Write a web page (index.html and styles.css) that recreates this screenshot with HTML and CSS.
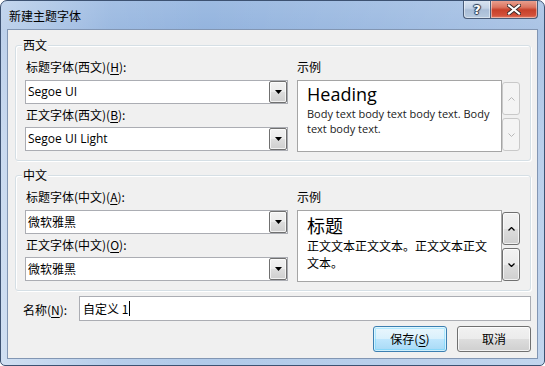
FILE: index.html
```html
<!DOCTYPE html>
<html lang="zh-CN">
<head>
<meta charset="utf-8">
<title>新建主题字体</title>
<link rel="stylesheet" href="styles.css">
</head>
<body>
<div class="window">
  <div class="titlebar">
    <span class="title">新建主题字体</span>
    <div class="caption-btns">
      <div class="cap help">?</div>
      <div class="cap close">
        <svg width="14" height="11" viewBox="0 0 14 11"><path d="M2 1.5 L12 9.5 M12 1.5 L2 9.5" stroke="#3a2a2a" stroke-width="4" stroke-linecap="square"/><path d="M2 1.5 L12 9.5 M12 1.5 L2 9.5" stroke="#fff" stroke-width="2.2" stroke-linecap="square"/></svg>
      </div>
    </div>
  </div>
  <div class="client">
    <div class="group">
      <span class="legend">西文</span>
      <div class="group-body">
        <div class="col-left">
          <div class="label">标题字体(西文)(<u>H</u>):</div>
          <div class="combo"><span class="combo-text latin">Segoe UI</span><span class="drop"><svg width="7" height="4" viewBox="0 0 7 4"><path d="M0 0 H7 L3.5 4 Z" fill="#000"/></svg></span></div>
          <div class="label second">正文字体(西文)(<u>B</u>):</div>
          <div class="combo"><span class="combo-text latin">Segoe UI Light</span><span class="drop"><svg width="7" height="4" viewBox="0 0 7 4"><path d="M0 0 H7 L3.5 4 Z" fill="#000"/></svg></span></div>
        </div>
        <div class="col-right">
          <div class="label">示例</div>
          <div class="preview-row">
            <div class="preview latin-preview">
              <div class="ph-latin">Heading</div>
              <div class="pb-latin">Body text body text body text. Body<br>text body text.</div>
            </div>
            <div class="spin">
              <div class="sbtn disabled"><svg width="7" height="4" viewBox="0 0 7 4"><path d="M0.5 3.5 L3.5 0.5 L6.5 3.5" fill="none" stroke="#b8b8b8" stroke-width="1"/></svg></div>
              <div class="sbtn disabled"><svg width="7" height="4" viewBox="0 0 7 4"><path d="M0.5 0.5 L3.5 3.5 L6.5 0.5" fill="none" stroke="#b8b8b8" stroke-width="1"/></svg></div>
            </div>
          </div>
        </div>
      </div>
    </div>

    <div class="group group-cn">
      <span class="legend">中文</span>
      <div class="group-body">
        <div class="col-left">
          <div class="label">标题字体(中文)(<u>A</u>):</div>
          <div class="combo"><span class="combo-text">微软雅黑</span><span class="drop"><svg width="7" height="4" viewBox="0 0 7 4"><path d="M0 0 H7 L3.5 4 Z" fill="#000"/></svg></span></div>
          <div class="label second">正文字体(中文)(<u>O</u>):</div>
          <div class="combo"><span class="combo-text">微软雅黑</span><span class="drop"><svg width="7" height="4" viewBox="0 0 7 4"><path d="M0 0 H7 L3.5 4 Z" fill="#000"/></svg></span></div>
        </div>
        <div class="col-right">
          <div class="label">示例</div>
          <div class="preview-row">
            <div class="preview cn-preview">
              <div class="ph-cn">标题</div>
              <div class="pb-cn">正文文本正文文本。正文文本正文<br>文本。</div>
            </div>
            <div class="spin">
              <div class="sbtn"><svg width="7" height="4" viewBox="0 0 7 4"><path d="M0.5 3.5 L3.5 0.5 L6.5 3.5" fill="none" stroke="#000" stroke-width="1.3"/></svg></div>
              <div class="sbtn"><svg width="7" height="4" viewBox="0 0 7 4"><path d="M0.5 0.5 L3.5 3.5 L6.5 0.5" fill="none" stroke="#000" stroke-width="1.3"/></svg></div>
            </div>
          </div>
        </div>
      </div>
    </div>

    <div class="name-row">
      <span class="name-label">名称(<u>N</u>):</span>
      <div class="name-input"><span>自定义 1</span><span class="caret"></span></div>
    </div>
    <div class="btn-row">
      <div class="btn default">保存(<u>S</u>)</div>
      <div class="btn">取消</div>
    </div>
  </div>
</div>
</body>
</html>
```

FILE: styles.css
```css
html, body {
  margin: 0;
  padding: 0;
  background: #ffffff;
}
body {
  font-family: "Noto Sans CJK SC", "Noto Sans", sans-serif;
  font-size: 12px;
  color: #000;
}
u { text-decoration-thickness: 1px; text-underline-offset: 2px; }

.window {
  width: 545px;
  height: 366px;
  box-sizing: border-box;
  border: 1px solid #3d5272;
  border-radius: 7px 7px 5px 5px;
  display: flex;
  flex-direction: column;
  overflow: hidden;
  background:
    linear-gradient(to right, rgba(255,255,255,0.4) 0%, rgba(255,255,255,0.08) 20%, rgba(255,255,255,0) 38%, rgba(255,255,255,0.1) 70%, rgba(255,255,255,0.22) 100%),
    linear-gradient(to bottom, #9dbbe2 0%, #94b4de 8%, #a7c2e6 40%, #b1cae9 100%);
}

.titlebar {
  height: 28px;
  flex: none;
  display: flex;
  align-items: flex-start;
}
.title {
  padding: 7px 0 0 8px;
  line-height: 16px;
  font-size: 12px;
  color: #000;
}
.caption-btns {
  margin-left: auto;
  margin-right: 6px;
  margin-top: -1px;
  display: flex;
}
.cap {
  height: 19px;
  box-sizing: border-box;
  border: 1px solid #4a5c78;
  border-top: none;
  display: flex;
  align-items: center;
  justify-content: center;
  box-shadow: inset 0 0 0 1px rgba(255,255,255,0.45);
}
.help {
  width: 27px;
  border-radius: 0 0 0 4px;
  border-right: none;
  background: linear-gradient(to bottom, #dbe5f2 0%, #c3d2e6 45%, #a9bdd7 55%, #b7cadf 100%);
  color: #fff;
  font-family: "DejaVu Sans", sans-serif;
  font-weight: bold;
  font-size: 13px;
  line-height: 17px;
  text-shadow: 0 0 1px #2c3a52, 1px 0 1px #2c3a52, -1px 0 1px #2c3a52, 0 1px 1px #2c3a52, 0 -1px 1px #2c3a52;
}
.close {
  width: 48px;
  border-radius: 0 0 4px 0;
  background: linear-gradient(to bottom, #eba595 0%, #dc7560 40%, #c7402a 55%, #d2503a 85%, #e07c66 100%);
}

.client {
  flex: 1;
  margin: 0 6px 6px 6px;
  border: 1px solid #8296b3;
  background: #f0f0f0;
  padding: 15px 6px 0 7px;
  display: flex;
  flex-direction: column;
}

.group {
  height: 116px;
  box-sizing: border-box;
  border: 1px solid #d5dfe5;
  border-radius: 3px;
  box-shadow: inset 1px 1px 0 #fff, 1px 1px 0 #fff;
  display: flex;
  flex-direction: column;
}
.group-cn { margin-top: 14px; }
.legend {
  align-self: flex-start;
  margin: -8px 0 0 6px;
  padding: 0 1px;
  line-height: 14px;
  background: #f0f0f0;
}
.group-body {
  display: flex;
  gap: 9px;
  padding: 0 10px 0 9px;
}
.col-left { width: 263px; display: flex; flex-direction: column; }
.col-right { width: 223px; display: flex; flex-direction: column; }

.label {
  line-height: 16px;
  margin: 7px 0 5px 1px;
}
.label.second { margin: 3px 0 4px 1px; }
.col-right .label { margin-left: 0; }

.combo {
  height: 24px;
  box-sizing: border-box;
  border: 1px solid #abadb3;
  background: #fff;
  display: flex;
  align-items: center;
}
.combo-text {
  flex: 1;
  padding-left: 2px;
  line-height: 16px;
}
.latin {
  font-family: "Open Sans", "Noto Sans", sans-serif;
  font-size: 12px;
}
.drop {
  width: 18px;
  height: 22px;
  box-sizing: border-box;
  border: 1px solid #707070;
  border-radius: 2px;
  background: linear-gradient(to bottom, #f2f2f2 0%, #ebebeb 50%, #dddddd 51%, #cfcfcf 100%);
  box-shadow: inset 0 0 0 1px rgba(255,255,255,0.7);
  display: flex;
  align-items: center;
  justify-content: center;
}

.preview-row {
  display: flex;
  height: 72px;
}
.preview {
  width: 205px;
  box-sizing: border-box;
  border: 1px solid #a5a5a5;
  background: #fff;
  padding: 1px 0 0 9px;
}
.ph-latin {
  font-family: "Open Sans", "Noto Sans", sans-serif;
  font-size: 18px;
  line-height: 24px;
  color: #000;
}
.pb-latin {
  font-family: "Open Sans", "Noto Sans", sans-serif;
  font-size: 11px;
  line-height: 15px;
  margin-top: 0;
  color: #222;
}
.ph-cn {
  font-size: 18px;
  line-height: 24px;
  margin-top: 1px;
}
.pb-cn {
  font-size: 12px;
  line-height: 17px;
}

.spin {
  width: 18px;
  margin-top: 2px;
  display: flex;
  flex-direction: column;
  gap: 3px;
}
.sbtn {
  height: 33px;
  box-sizing: border-box;
  border: 1px solid #707070;
  border-radius: 3px;
  background: linear-gradient(to bottom, #f2f2f2 0%, #ebebeb 50%, #dddddd 51%, #cfcfcf 100%);
  box-shadow: inset 0 0 0 1px rgba(255,255,255,0.7);
  display: flex;
  align-items: center;
  justify-content: center;
}
.sbtn.disabled {
  border-color: #c9c9c9;
  background: #f4f4f4;
  box-shadow: none;
}

.name-row {
  display: flex;
  align-items: center;
  margin-top: 5px;
}
.name-label {
  width: 56px;
  padding-left: 8px;
  line-height: 16px;
  padding-top: 2px;
}
.name-input {
  width: 452px;
  height: 25px;
  box-sizing: border-box;
  border: 1px solid #abadb3;
  background: #fff;
  display: flex;
  align-items: center;
  padding-left: 3px;
  line-height: 16px;
}
.caret {
  width: 1px;
  height: 15px;
  background: #000;
  margin-left: 1px;
}

.btn-row {
  display: flex;
  justify-content: flex-end;
  gap: 10px;
  margin-top: 5px;
}
.btn {
  width: 74px;
  height: 26px;
  box-sizing: border-box;
  border: 1px solid #707070;
  border-radius: 3px;
  background: linear-gradient(to bottom, #f2f2f2 0%, #ebebeb 50%, #dddddd 51%, #cfcfcf 100%);
  box-shadow: inset 0 0 0 1px rgba(255,255,255,0.75);
  display: flex;
  align-items: center;
  justify-content: center;
  line-height: 16px;
}
.btn.default {
  border-color: #3c7fb1;
  background: linear-gradient(to bottom, #eaf6fd 0%, #d9f0fc 50%, #bee6fd 51%, #a7d9f5 100%);
  box-shadow: inset 0 0 0 1px rgba(255,255,255,0.6), inset 0 0 0 2px rgba(72,208,255,0.35);
}
```
